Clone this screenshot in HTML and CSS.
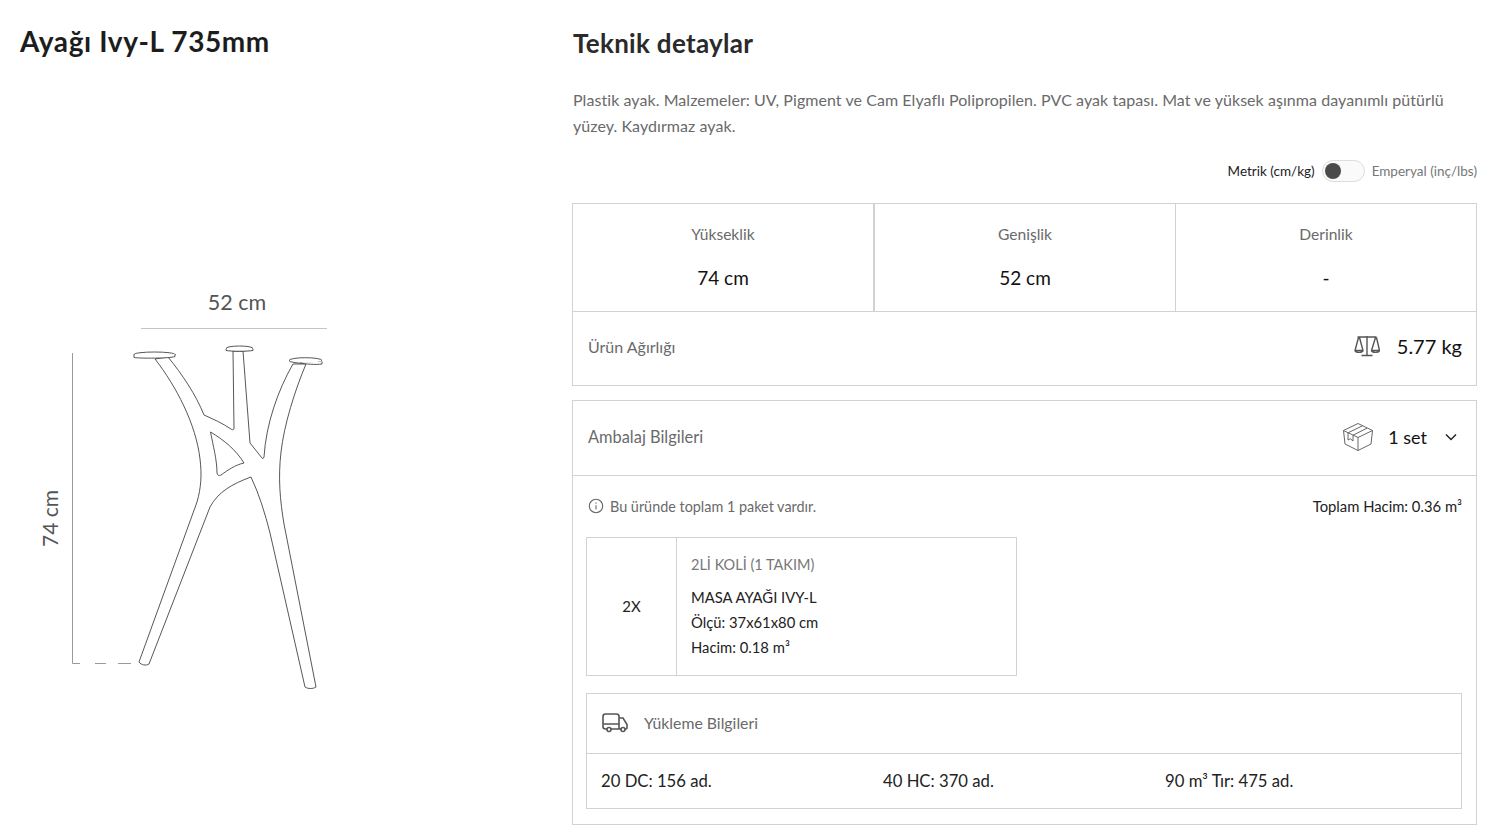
FILE: index.html
```html
<!DOCTYPE html>
<html lang="tr">
<head>
<meta charset="utf-8">
<title>Ayağı Ivy-L 735mm</title>
<link rel="stylesheet" href="styles.css">
</head>
<body>
<main class="page">
  <section class="product">
    <h1 class="product-title">Ayağı Ivy-L 735mm</h1>
    <svg class="drawing" viewBox="20 280 340 420" width="340" height="420" role="img" aria-label="Ayak çizimi">
      <text class="dim-text dim-text-w" x="237" y="310" text-anchor="middle">52 cm</text>
      <line class="dim-line" x1="141" y1="328.500" x2="327" y2="328.500"/>
      <text class="dim-text" x="0" y="0" text-anchor="middle" transform="translate(58 518.500) rotate(-90)">74 cm</text>
      <path class="dim-thin" d="M72.500 353V663.500H80"/>
      <path class="dim-thin" d="M95 663.500H106M118 663.500H131"/>
      <path class="leg" d="M155 359C176 386 196 424 200 459C202 475 201 488 197 502L139 662C141 665 146 666 149 664L210 507C218 492 232 484 251 477C259 494 265 513 270 533L305 687C308 689 313 689 316 687L284 524C280 500 278 478 281 452C284 425 295 390 306 364H293C278 390 266 424 264 457C263 459 263 459 262 458L250 443L243 351H233L234 429C233 430 232 430 231 429C222 423 213 419 204 415C196 395 182 374 168 357Z"/>
      <path class="leg" d="M210.500 432C224 440 236 450 244 463C235 465 228 470 221 475C219 476 218 476 217 473C217 460 213 445 210.500 432Z"/>
      <ellipse class="leg" cx="154.500" cy="354.500" rx="20.500" ry="2.500"/>
      <path class="leg" d="M134 355V357.500C140 358.500 170 358.500 175 356.500V354"/>
      <ellipse class="leg" cx="239.500" cy="348.500" rx="13.500" ry="2.500"/>
      <path class="leg" d="M226 349V350.500C232 351.500 247 351.500 253 350.500V349"/>
      <ellipse class="leg" cx="305.500" cy="360.500" rx="16.500" ry="2.800"/>
      <path class="leg" d="M322 361.500V364C316 365 305 364 300 363"/>
    </svg>
  </section>

  <section class="specs">
    <h2 class="specs-title">Teknik detaylar</h2>
    <p class="specs-desc">Plastik ayak. Malzemeler: UV, Pigment ve Cam Elyaflı Polipropilen. PVC ayak tapası. Mat ve yüksek aşınma dayanımlı pütürlü yüzey. Kaydırmaz ayak.</p>

    <div class="unit-switch">
      <span class="unit-on">Metrik (cm/kg)</span>
      <span class="toggle"><span class="toggle-knob"></span></span>
      <span class="unit-off">Emperyal (inç/lbs)</span>
    </div>

    <div class="dims">
      <div class="dims-row">
        <div class="dim-cell dim-cell-first"><span class="dim-label">Yükseklik</span><strong class="dim-value">74 cm</strong></div>
        <div class="dim-cell dim-cell-mid"><span class="dim-label">Genişlik</span><strong class="dim-value">52 cm</strong></div>
        <div class="dim-cell"><span class="dim-label">Derinlik</span><strong class="dim-value">-</strong></div>
      </div>
      <div class="weight-row">
        <span class="row-label">Ürün Ağırlığı</span>
        <span class="row-end">
          <svg class="icon-scale" viewBox="0 0 26 22" width="26" height="22"><path d="M13 1V20M7.500 20.500H18.500M3.500 2H22.500M4.500 2.500L1 15.500C1.500 18 8.500 18 9 15.500L5.500 2.500M1 15.500H9M21.500 2.500L17.500 15.500C18 18 25 18 25.500 15.500L22.500 2.500M17.500 15.500H25.500"/></svg>
          <span class="row-value">5.77 kg</span>
        </span>
      </div>
    </div>

    <div class="package">
      <div class="package-head">
        <span class="row-label row-label-wide">Ambalaj Bilgileri</span>
        <span class="row-end">
          <svg class="icon-box" viewBox="0 0 32 30" width="32" height="30"><path d="M16 1.500L30.500 8.500L29 22L16 28.500L3 22L1.500 8.500ZM1.500 8.500L16 15.500L30.500 8.500M16 15.500V28.500M6 10.800L20.500 3.800M11 13.200L25 6.200M6 10.800V18L8.500 16.800L11 19V13.200"/></svg>
          <span class="row-value row-value-set">1 set</span>
          <svg class="icon-chev" viewBox="0 0 12 8" width="12" height="8"><path d="M1 1.500L6 6.500L11 1.500"/></svg>
        </span>
      </div>
      <div class="package-body">
        <div class="info-row">
          <span class="info-note">
            <svg class="icon-info" viewBox="0 0 16 16" width="16" height="16"><circle cx="8" cy="8" r="6.700"/><path d="M8 7.200V11.500M8 4.500V5.800"/></svg>
            Bu üründe toplam 1 paket vardır.
          </span>
          <span class="info-total">Toplam Hacim: 0.36 m³</span>
        </div>
        <div class="box-card">
          <div class="box-qty">2X</div>
          <div class="box-detail">
            <div class="box-name">2Lİ KOLİ (1 TAKIM)</div>
            <div class="box-line">MASA AYAĞI IVY-L</div>
            <div class="box-line">Ölçü: 37x61x80 cm</div>
            <div class="box-line">Hacim: 0.18 m³</div>
          </div>
        </div>
        <div class="load">
          <div class="load-head">
            <svg class="icon-truck" viewBox="0 0 26 20" width="26" height="20"><path d="M5 16H3.500C2 16 1 15 1 13.500V3.500C1 2 2 1 3.500 1H14.500C16 1 17 2 17 3.500V16H9M17 5H21L25 11.500V15C25 15.600 24.600 16 24 16H23M19 16H17M1 11H17"/><circle cx="7" cy="16.500" r="2"/><circle cx="21" cy="16.500" r="2"/></svg>
            <span class="row-label row-label-narrow">Yükleme Bilgileri</span>
          </div>
          <div class="load-row">
            <span class="load-item">20 DC: 156 ad.</span>
            <span class="load-item">40 HC: 370 ad.</span>
            <span class="load-item">90 m³ Tır: 475 ad.</span>
          </div>
        </div>
      </div>
    </div>
  </section>
</main>
</body>
</html>
```
FILE: styles.css
```css
* { box-sizing: border-box; }
html, body { margin: 0; background: #fff; }
body {
  font-family: "Lato", "Open Sans", sans-serif;
  color: #222;
  height: 836px;
  overflow: hidden;
}
.page {
  display: flex;
  padding: 0 19px 0 20px;
}
.product { width: 552px; flex: none; }
.product-title {
  margin: 24px 0 0;
  font-size: 28px;
  line-height: 34px;
  font-weight: 700;
  letter-spacing: 0.6px;
  color: #1d1d1d;
}
.drawing { display: block; margin: 222px 0 0 0; }
.dim-text { font-family: "Lato", sans-serif; font-size: 21px; fill: #555; }
.dim-text-w { font-size: 21.500px; }
.dim-line { stroke: #c4c4c4; stroke-width: 1; }
.dim-thin { fill: none; stroke: #9a9a9a; stroke-width: 1; }
.leg { fill: #fff; stroke: #444; stroke-width: 0.9; }

.specs { flex: 1; min-width: 0; }
.specs-title {
  margin: 26px 0 0 1px;
  font-size: 26px;
  line-height: 34px;
  font-weight: 700;
  letter-spacing: 0.3px;
  color: #2a2a2a;
}
.specs-desc {
  margin: 27px 0 0 1px;
  font-size: 16px;
  line-height: 26px;
  letter-spacing: 0.06px;
  color: #6a6a6a;
}
.unit-switch {
  display: flex;
  justify-content: flex-end;
  align-items: center;
  gap: 7px;
  margin-top: 20px;
  height: 24px;
  font-size: 13.500px;
}
.unit-on { color: #222; }
.unit-off { color: #777; }
.toggle {
  display: block;
  width: 43px;
  height: 22px;
  border: 1px solid #ddd;
  border-radius: 11px;
  background: #fafafa;
  padding: 2px;
}
.toggle-knob {
  display: block;
  width: 16px;
  height: 16px;
  border-radius: 50%;
  background: #4a4a4a;
}

.dims {
  margin-top: 20px;
  border: 1px solid #d2d2d2;
}
.dims-row {
  display: grid;
  grid-template-columns: 302px 301px 1fr;
  height: 108px;
  border-bottom: 1px solid #d2d2d2;
}
.dim-cell {
  display: flex;
  flex-direction: column;
  align-items: center;
  padding-top: 19px;
}
.dim-cell-first { border-right: 2px solid #d2d2d2; }
.dim-cell-mid { border-right: 1px solid #d2d2d2; }
.dim-label { font-size: 15.600px; line-height: 22px; color: #6a6a6a; }
.dim-value { margin-top: 21px; font-size: 19px; line-height: 24px; font-weight: 400; color: #111; }
.weight-row {
  display: flex;
  justify-content: space-between;
  align-items: center;
  height: 73px;
  padding: 0 14px 5px 15px;
}
.row-label { font-size: 16px; color: #6a6a6a; }
.row-label-wide { font-size: 16.400px; }
.row-label-narrow { font-size: 15.800px; }
.row-end { display: flex; align-items: center; }
.row-value { font-size: 20px; color: #111; margin-left: 17px; }
.row-value-set { font-size: 18px; margin-left: 14px; }
.icon-scale, .icon-box, .icon-truck, .icon-info, .icon-chev { fill: none; flex: none; }
.icon-scale path { stroke: #555; stroke-width: 1.400; }
.icon-box path { stroke: #666; stroke-width: 1; stroke-linejoin: round; }
.icon-chev { margin: 0 5px 0 18px; }
.icon-chev path { stroke: #222; stroke-width: 1.500; }
.icon-info * { stroke: #666; stroke-width: 1.100; }
.icon-truck * { stroke: #555; stroke-width: 1.600; }

.package {
  margin-top: 14px;
  border: 1px solid #d2d2d2;
}
.package-head {
  display: flex;
  justify-content: space-between;
  align-items: center;
  height: 75px;
  padding: 0 14px 3px 15px;
  border-bottom: 1px solid #d2d2d2;
}
.package-body { padding: 18px 14px 15px 13px; height: 348px; }
.info-row {
  display: flex;
  justify-content: space-between;
  align-items: center;
  height: 24px;
  margin-left: 2px;
}
.info-note { display: flex; align-items: center; gap: 6px; color: #6a6a6a; font-size: 14.400px; }
.info-total { color: #222; font-size: 14.800px; }
.box-card {
  display: flex;
  width: 431px;
  height: 139px;
  margin-top: 19px;
  border: 1px solid #d2d2d2;
}
.box-qty {
  display: flex;
  align-items: center;
  justify-content: center;
  width: 90px;
  flex: none;
  border-right: 1px solid #d2d2d2;
  padding-bottom: 2px;
  font-size: 15px;
}
.box-detail { padding: 14px 14px; font-size: 14.800px; color: #222; }
.box-name { line-height: 26px; color: #777; margin-bottom: 7px; font-size: 14.500px; }
.box-line { line-height: 25px; }
.load {
  margin-top: 17px;
  border: 1px solid #d2d2d2;
}
.load-head {
  display: flex;
  align-items: center;
  gap: 16px;
  height: 60px;
  padding: 0 15px 2px;
  border-bottom: 1px solid #d2d2d2;
}
.load-row {
  display: grid;
  grid-template-columns: 282px 282px 1fr;
  align-items: center;
  height: 54px;
  padding: 0 14px;
  font-size: 16.700px;
  color: #222;
}
```
